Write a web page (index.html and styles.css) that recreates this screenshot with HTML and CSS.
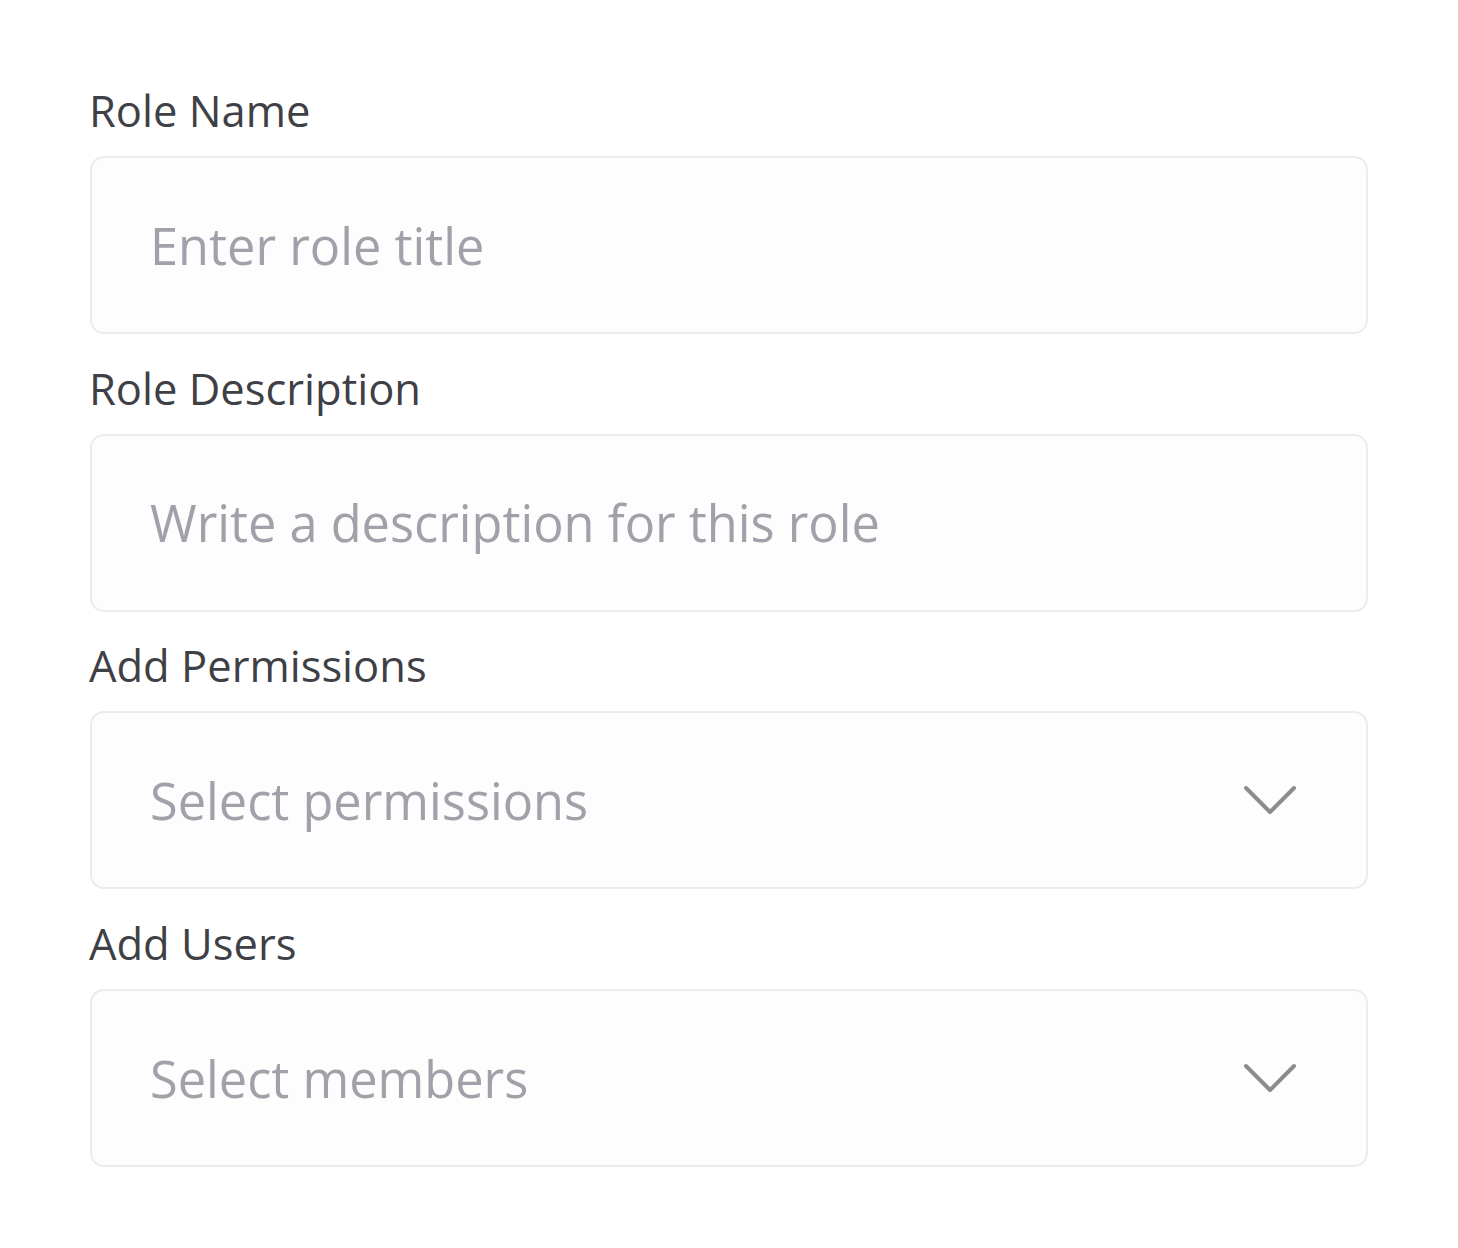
FILE: index.html
```html
<!DOCTYPE html>
<html lang="en">
<head>
  <meta charset="UTF-8">
  <meta name="viewport" content="width=device-width, initial-scale=1.0">
  <title>New Role</title>
  <link rel="stylesheet" href="styles.css">
</head>
<body>

  <form class="role-form">
    <div class="field">
      <label class="field-label" for="roleName">Role Name</label>
      <input class="field-input" id="roleName" type="text" placeholder="Enter role title">
    </div>

    <div class="field">
      <label class="field-label" for="roleDesc">Role Description</label>
      <input class="field-input" id="roleDesc" type="text" placeholder="Write a description for this role">
    </div>

    <div class="field">
      <label class="field-label">Add Permissions</label>
      <div class="field-select">
        <span class="select-text">Select permissions</span>
        <svg class="chevron" viewBox="0 0 56 32" width="56" height="32">
          <path d="M4 4 L28 28 L52 4" fill="none" stroke="#8c8c8c" stroke-width="4" stroke-linecap="round" stroke-linejoin="round"/>
        </svg>
      </div>
    </div>

    <div class="field">
      <label class="field-label">Add Users</label>
      <div class="field-select">
        <span class="select-text">Select members</span>
        <svg class="chevron" viewBox="0 0 56 32" width="56" height="32">
          <path d="M4 4 L28 28 L52 4" fill="none" stroke="#8c8c8c" stroke-width="4" stroke-linecap="round" stroke-linejoin="round"/>
        </svg>
      </div>
    </div>
  </form>

</body>
</html>
```

FILE: styles.css
```css
/* Page */
body {
  font-family: 'Open Sans', sans-serif;
  background-color: #ffffff;
  margin: 0;
  padding: 0;
}

.role-form {
  display: flex;
  flex-direction: column;
  gap: 24.7px;
  padding: 81px 90px 0 90px;
}

/* Field = label + control */
.field {
  display: flex;
  flex-direction: column;
  gap: 15px;
}

.field-label {
  font-size: 43.5px;
  line-height: 60px;
  margin-left: -1px;
  color: #3f3f46;
}

.field-input,
.field-select {
  box-sizing: border-box;
  width: 100%;
  height: 178px;
  border: 2px solid #ececec;
  border-radius: 14px;
  background-color: #fdfdfd;
  padding: 0 58px;
  font-family: inherit;
  font-size: 50.5px;
  color: #3f3f46;
  outline: none;
}

.field-input::placeholder {
  color: #a1a1aa;
}

/* Dropdowns */
.field-select {
  display: flex;
  align-items: center;
  justify-content: space-between;
  padding-right: 68px;
  cursor: pointer;
}

.select-text {
  color: #a1a1aa;
}

.chevron {
  display: block;
}
```
